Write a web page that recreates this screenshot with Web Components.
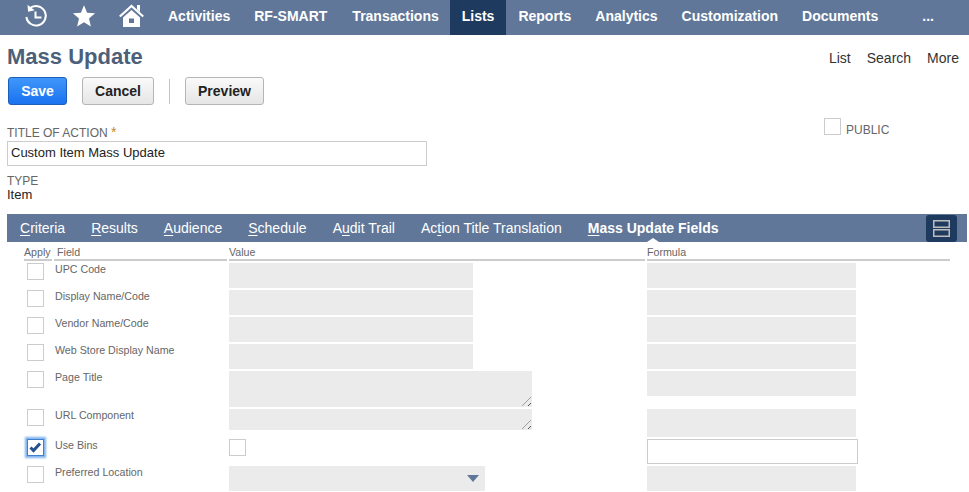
<!DOCTYPE html>
<html><head><meta charset="utf-8">
<style>
html,body{margin:0;padding:0;background:#fff;overflow:hidden}
body{font-family:"Liberation Sans",Arial,sans-serif;width:969px;height:492px}
</style></head><body>
<app-nav></app-nav>
<page-head></page-head>
<action-form></action-form>
<tab-bar></tab-bar>
<field-table></field-table>
<script>
const def=(n,html)=>customElements.define(n,class extends HTMLElement{constructor(){super();this.attachShadow({mode:'open'}).innerHTML=html;}});
def('app-nav',`<style>
:host{display:flex;height:35px;background:#607799;color:#fff;font:bold 14px "Liberation Sans",Arial,sans-serif;white-space:nowrap}
.icons{display:flex;align-items:center;width:156px;padding-left:24px;box-sizing:border-box}
a{display:flex;align-items:center;padding:0 12px 4px}
a.on{background:#1f3a5f}
a.more{margin-left:20px}
svg{display:block;flex:none}
</style>
<div class="icons">
<svg width="24" height="24" viewBox="0 0 24 24" style="margin-top:-4px;margin-right:24px" fill="none" stroke="#fff" stroke-width="2"><path d="M5.500 4.600A9.700 9.700 0 1 1 2.400 13"/><path d="M11.500 7.500v6h6"/><path d="M3.500 .8l.6 7 6.500-1.600z" fill="#fff" stroke="none"/></svg>
<svg width="24" height="24" viewBox="0 0 24 24" style="margin-top:-4px;margin-right:23px"><path fill="#fff" d="M12 1.200l3.100 7.500 8 .6-6.100 5.200 1.900 7.900L12 18.200 5.100 22.400 7 14.500.9 9.300l8-.6z"/></svg>
<svg width="25" height="25" viewBox="0 0 25 25" style="margin-top:-4px"><path fill="none" stroke="#fff" stroke-width="2.200" d="M.8 13.500L12.500 3 24.200 13.500"/><path fill="#fff" fill-rule="evenodd" d="M18 2h3v7l-3-2.700zM4 14.500L12.500 7 21 14.500V24H4zM10 15.500v4.500h5v-4.500z"/></svg>
</div>
<a>Activities</a><a style="padding-right:13px">RF-SMART</a><a style="padding-right:11px">Transactions</a><a class="on">Lists</a><a>Reports</a><a>Analytics</a><a>Customization</a><a>Documents</a><a class="more">...</a>`);
def('ui-button',`<style>
:host{display:inline-flex;align-items:center;justify-content:center;box-sizing:border-box;height:28px;border:1px solid #b5b5b5;border-radius:3px;background:linear-gradient(#fafafa,#e5e5e5);color:#222;font:bold 14px "Liberation Sans",Arial,sans-serif;padding:0 12px}
:host([primary]){background:linear-gradient(#3f97fb,#1a72f0);border-color:#1d5fb8;color:#fff}
</style><slot></slot>`);
def('page-head',`<style>
:host{display:block;height:70px}
.row{display:flex;justify-content:space-between;align-items:flex-start}
h1{margin:0;padding:9px 0 0 7px;font:bold 22px/26px "Liberation Sans",Arial,sans-serif;color:#4d5f79}
nav{display:flex;gap:16px;padding:15px 10px 0 0;font:14px/17px "Liberation Sans",Arial,sans-serif;color:#333}
.btns{display:flex;align-items:center;padding-left:8px;margin-top:7px}
.sep{width:1px;height:25px;background:#c4c4c4;margin:0 15px}
</style>
<div class="row"><h1>Mass Update</h1><nav><span>List</span><span>Search</span><span>More</span></nav></div>
<div class="btns"><ui-button primary style="width:59px;margin-right:15px">Save</ui-button><ui-button style="width:72px">Cancel</ui-button><span class="sep"></span><ui-button style="width:79px">Preview</ui-button></div>`);
def('check-box',`<style>
:host{display:block;box-sizing:border-box;width:17px;height:17px;border:1px solid #ccc;background:#fff}
:host([checked]){border:1px solid #3f7fd0;box-shadow:0 0 2px 2px #7fb2ec}
svg{display:none;width:15px;height:15px}
:host([checked]) svg{display:block}
</style><svg viewBox="0 0 15 15"><path fill="none" stroke="#24518f" stroke-width="3" d="M2.500 7.500l3 3 6.500-7"/></svg>`);
def('action-form',`<style>
:host{display:block;box-sizing:border-box;height:109px;padding:20px 7px 0;position:relative;font:12px "Liberation Sans",Arial,sans-serif;color:#666}
.l{line-height:14px}
.star{color:#c8891e;font-size:14px}
.in{box-sizing:border-box;width:420px;height:25px;border:1px solid #ccc;margin-top:1px;padding-left:3px;font-size:13px;line-height:21px;color:#222}
.t{padding-top:8px;line-height:14px}
.v{font-size:13px;line-height:13px;color:#222}
.pub{position:absolute;left:824px;top:13px;display:flex;align-items:flex-end;gap:5px;line-height:14px}
</style>
<div class="l">TITLE OF ACTION <span class="star">*</span></div>
<div class="in">Custom Item Mass Update</div>
<div class="t">TYPE</div><div class="v">Item</div>
<div class="pub"><check-box></check-box><span style="margin-bottom:-2px">PUBLIC</span></div>`);
def('tab-bar',`<style>
:host{display:flex;align-items:center;box-sizing:border-box;margin:0 2px 0 7px;height:28px;background:#607799;color:#fff;font:14px "Liberation Sans",Arial,sans-serif;padding:0 0 0 13px;white-space:nowrap;position:relative}
span{margin-right:26px}
u{text-underline-offset:2px}
.on{font-weight:bold}
.notch{position:absolute;left:640px;bottom:0;width:0;height:0;margin:0;border:6px solid transparent;border-top:0;border-bottom:4px solid #fff}
.tog{position:absolute;right:10px;top:1px;width:31px;height:27px;background:#1f3a5f;border-radius:3px;display:flex;align-items:center;justify-content:center}
</style>
<span><u>C</u>riteria</span><span><u>R</u>esults</span><span><u>A</u>udience</span><span><u>S</u>chedule</span><span>A<u>u</u>dit Trail</span><span>Ac<u>t</u>ion Title Translation</span><span class="on"><u>M</u>ass Update Fields</span><span class="notch"></span>
<div class="tog"><svg width="17" height="17" viewBox="0 0 17 17" fill="none" stroke="#bdbdbd" stroke-width="1.500"><rect x=".75" y=".75" width="15.500" height="6.500"/><rect x=".75" y="9.750" width="15.500" height="6.500"/></svg></div>`);
const rows=[
['UPC Code',25,'i',25],['Display Name/Code',25,'i',25],['Vendor Name/Code',25,'i',25],['Web Store Display Name',25,'i',25],
['Page Title',36,'ta',25],['URL Component',21,'ta',28],['Use Bins',25,'c','box'],['Preferred Location',25,'s',25]];
const rowH=[27,27,27,27,38,30,27,27];
def('field-table',`<style>
:host{display:block;margin-left:24px;width:926px;font:10.670px "Liberation Sans",Arial,sans-serif;color:#666}
.h{display:grid;grid-template-columns:28px 173px 416px 1fr;column-gap:2px;height:21px}
.h div{border-bottom:2px solid #ccc;line-height:14px;padding-top:3px;box-sizing:border-box;height:19px}
.h .p{padding-left:3px}
.r{display:grid;grid-template-columns:30px 175px 418px 1fr;align-content:start}
.b{margin:0 0 0 3px}
.n{line-height:13px;padding-left:1px}
.g{background:#ebebeb;position:relative}
.g.ta::after{content:"";position:absolute;right:1px;bottom:1px;width:9px;height:9px;background:repeating-linear-gradient(135deg,transparent 0 2px,#555 2px 3px,transparent 3px 4px);clip-path:polygon(100% 0,100% 100%,0 100%)}
.arrow{position:absolute;right:6px;top:9px;width:0;height:0;border:6px solid transparent;border-top:7px solid #607799;border-bottom:0}
.fbox{box-sizing:border-box;border:1px solid #ccc;width:211px;height:25px}
</style><div class="h"><div>Apply</div><div class="p">Field</div><div>Value</div><div>Formula</div></div>
${rows.map((r,i)=>{const w=r[2]=='i'?244:r[2]=='ta'?303:r[2]=='s'?256:0;
const val=r[2]=='c'?'<check-box></check-box>':`<div class="g ${r[2]}" style="width:${w}px;height:${r[1]}px">${r[2]=='s'?'<span class="arrow"></span>':''}</div>`;
const f=r[3]=='box'?'<div class="fbox"></div>':`<div class="g" style="width:209px;height:${r[3]}px"></div>`;
return `<div class="r" style="height:${rowH[i]}px"><check-box class="b" ${r[2]=='c'?'checked':''}></check-box><div class="n">${r[0]}</div><div>${val}</div><div>${f}</div></div>`}).join('')}`);
</script>
</body></html>
